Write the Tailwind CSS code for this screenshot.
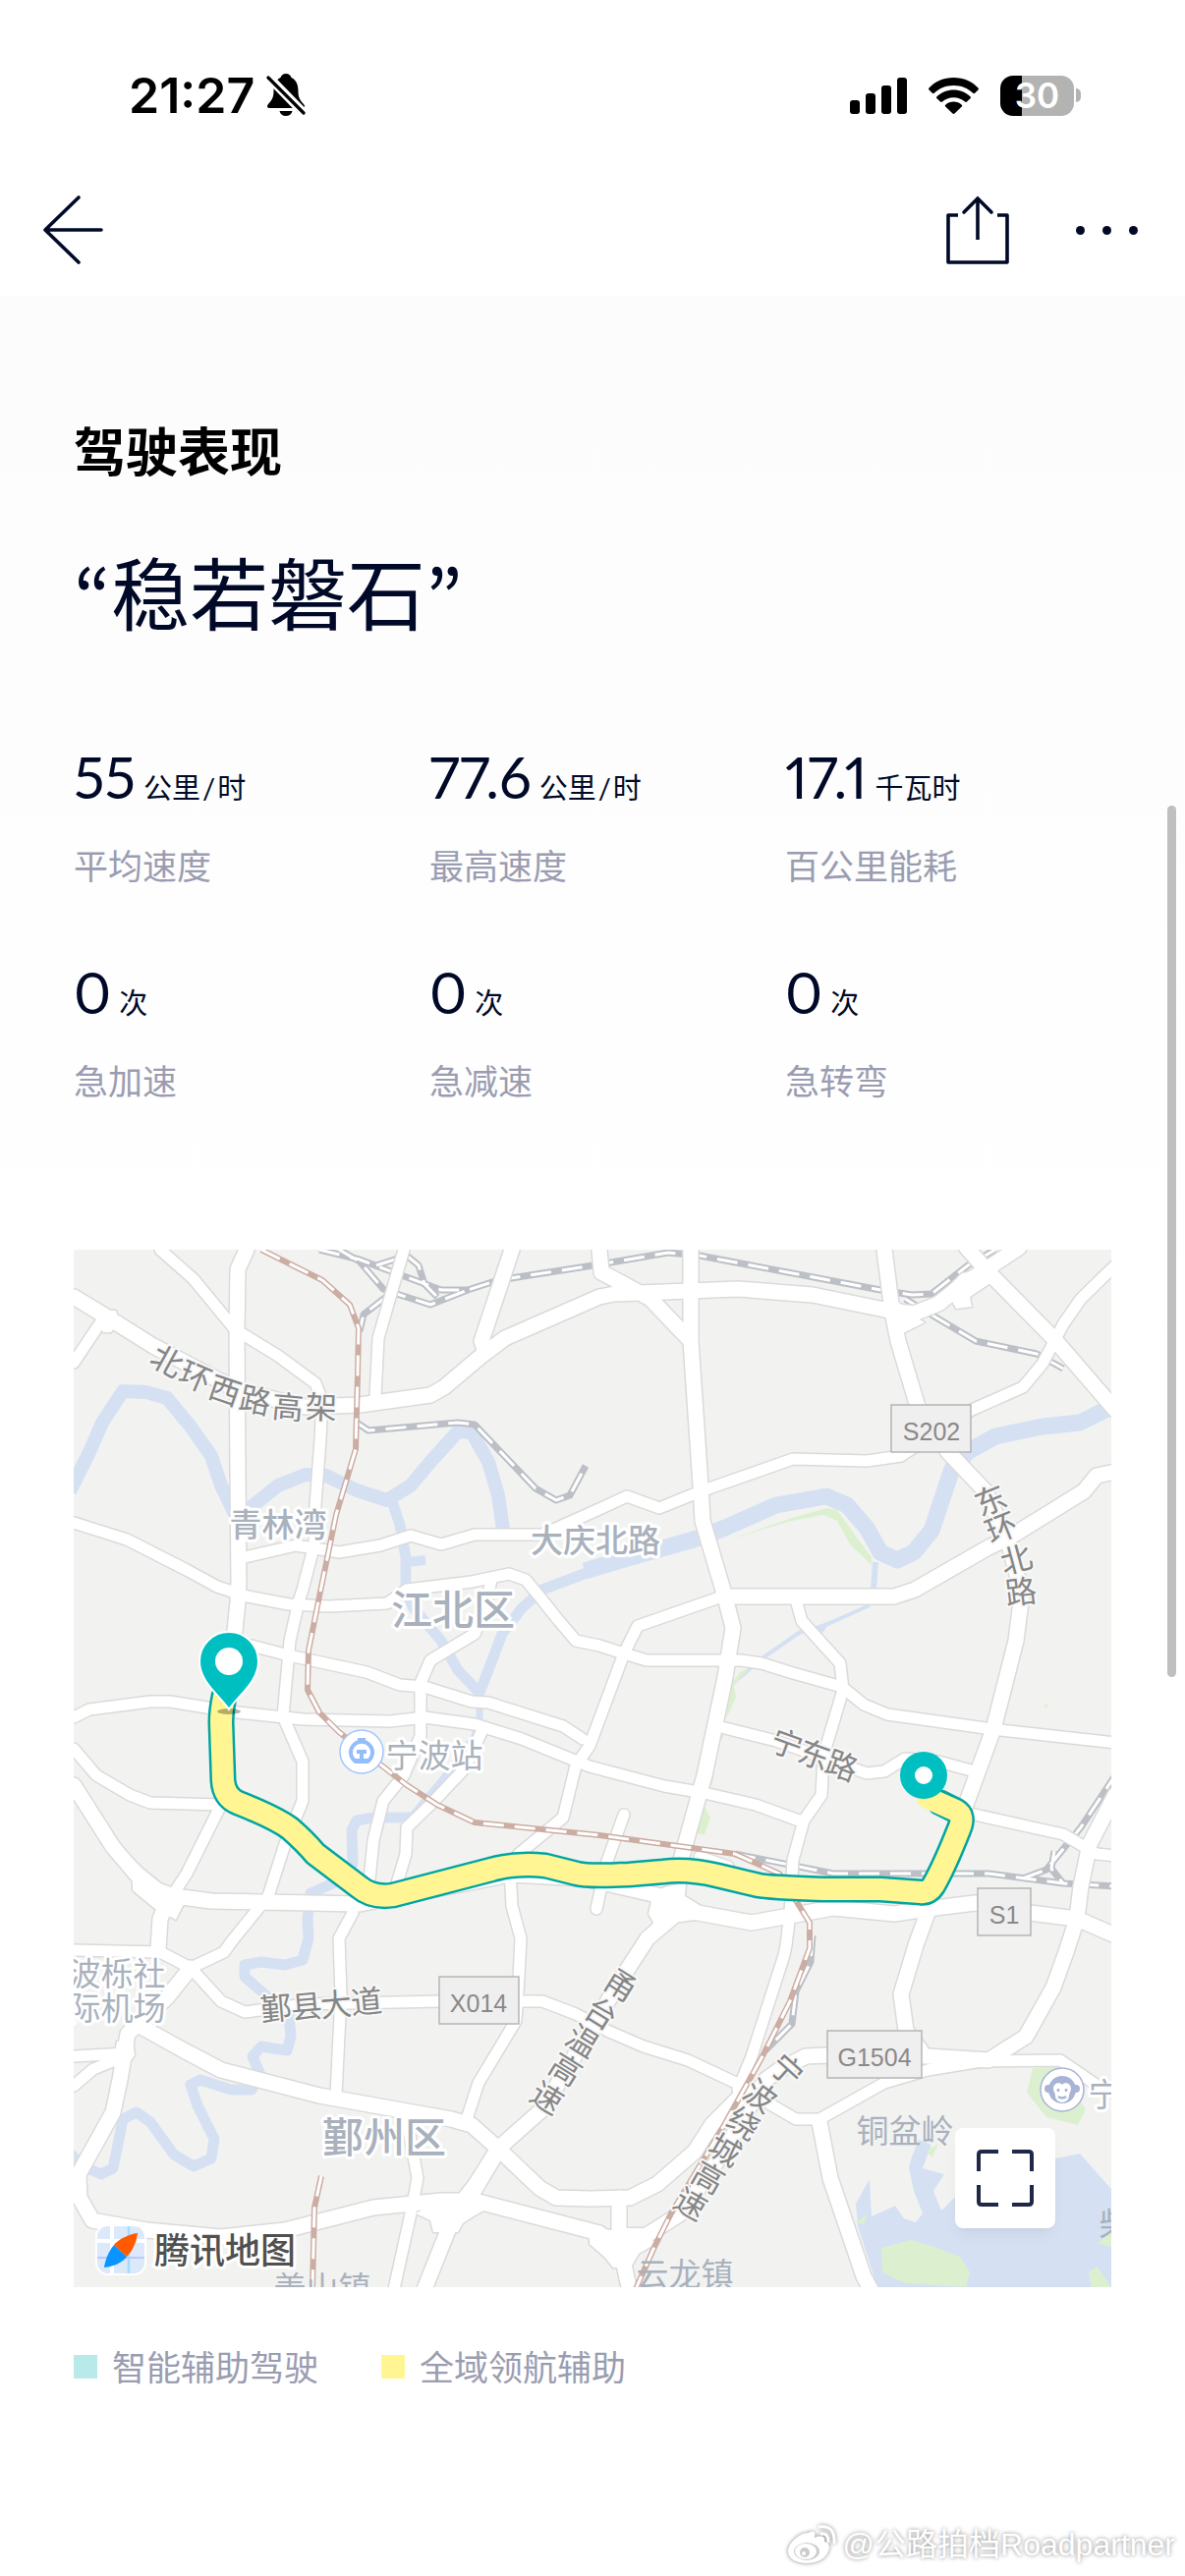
<!DOCTYPE html>
<html lang="zh-CN">
<head>
    <meta charset="UTF-8">
    <meta name="viewport" content="width=device-width, initial-scale=1.0">
    <title>驾驶表现</title>
    <script src="https://cdn.jsdelivr.net/npm/@tailwindcss/browser@4"></script>
</head>
<body class="relative min-h-screen bg-white text-[#000a28] font-['Lato','Noto_Sans_CJK_SC',sans-serif]">

    <!-- status bar -->
    <div class="flex h-[194px] items-center justify-between pl-[131px] pr-[106px] text-black">
        <div class="flex items-center gap-3">
            <span class="font-['Inter',sans-serif] text-[50px] font-semibold leading-none">21:27</span>
            <svg class="h-11 w-10" viewBox="0 0 40 44" fill="currentColor">
                <path d="M20 0c-3 0-5 2-5.500 4C9 6.500 7.500 12 7.500 18c0 7-2.500 9.500-5.500 13-1.800 2.200-1 4 1.500 4h33c2.500 0 3.300-1.800 1.500-4-3-3.500-5.500-6-5.500-13 0-6-1.500-11.500-7-14C25 2 23 0 20 0zM13.500 38c.8 3.200 3.200 5 6.500 5s5.700-1.800 6.500-5z"/>
                <path d="M2 3l36 37" stroke="#fff" stroke-width="9"/>
                <path d="M2 4l36 36" stroke="#000" stroke-width="3.200" stroke-linecap="round"/>
            </svg>
        </div>
        <div class="flex items-center gap-[22px]">
            <svg class="h-[37px] w-[58px]" viewBox="0 0 58 37" fill="currentColor">
                <rect y="23" width="10" height="14" rx="3"/>
                <rect x="16" y="16" width="10" height="21" rx="3"/>
                <rect x="32" y="8" width="10" height="29" rx="3"/>
                <rect x="48" width="10" height="37" rx="3"/>
            </svg>
            <svg class="h-[37px] w-[51px]" viewBox="0 0 51 37" fill="currentColor">
                <path d="M25.500 0C35.500 0 44.500 4 50.500 10.500c.6.600.6 1.400 0 2l-3.300 3.300c-.6.600-1.400.6-2 0C40 10.700 33 8 25.500 8S11 10.700 5.800 15.800c-.6.600-1.400.6-2 0L.5 12.500c-.6-.6-.6-1.400 0-2C6.500 4 15.500 0 25.500 0z"/>
                <path d="M25.500 12.500c6.500 0 12.500 2.500 17 6.700.6.600.6 1.400 0 2L39 24.600c-.6.600-1.400.6-2 0-3-2.700-7-4.300-11.500-4.300S17 21.900 14 24.600c-.6.600-1.400.6-2 0l-3.500-3.400c-.6-.6-.6-1.400 0-2 4.500-4.200 10.500-6.700 17-6.700z"/>
                <path d="M25.500 24.500c3.200 0 6 1.200 8.300 3.200.6.500.6 1.300 0 1.900l-7.300 7c-.6.500-1.400.5-2 0l-7.300-7c-.6-.6-.6-1.400 0-1.900 2.300-2 5.100-3.200 8.300-3.200z"/>
            </svg>
            <div class="flex items-center gap-0.5">
                <div class="flex h-[41px] w-[75px] items-center justify-center rounded-[13px] bg-linear-to-r from-black from-30% to-[#b3b3b3] to-30% font-['Inter',sans-serif] text-[35px] font-semibold leading-none text-white">30</div>
                <div class="h-3.5 w-[5px] rounded-r-full bg-[#b3b3b3]"></div>
            </div>
        </div>
    </div>

    <!-- nav -->
    <nav class="flex h-20 items-center justify-between pl-11 pr-12">
        <button aria-label="返回">
            <svg class="h-[70px] w-[62px]" viewBox="0 0 62 70" fill="none" stroke="currentColor" stroke-width="3.600" stroke-linecap="round" stroke-linejoin="round">
                <path d="M36 2L2 35l34 33M2 35h57"/>
            </svg>
        </button>
        <div class="flex items-center gap-[68px]">
            <button aria-label="分享">
                <svg class="h-[70px] w-[64px]" viewBox="0 0 64 70" fill="none" stroke="currentColor" stroke-width="3.600">
                    <path d="M12 20H2v48h60V20H52M32 3v42" stroke-linejoin="round"/>
                    <path d="M18 17L32 3l14 14" stroke-linecap="round"/>
                </svg>
            </button>
            <button aria-label="更多" class="flex gap-[18px]">
                <i class="size-[9px] rounded-full bg-current"></i>
                <i class="size-[9px] rounded-full bg-current"></i>
                <i class="size-[9px] rounded-full bg-current"></i>
            </button>
        </div>
    </nav>

    <main class="mt-[27px] bg-linear-to-b from-[#fcfcfc] to-white to-50% px-[75px] pt-[120px]">
        <h2 class="text-[53px] font-bold leading-[78px] text-black">驾驶表现</h2>
        <h1 class="mt-[45px] flex text-[80px] leading-[120px]"><span class="font-['Noto_Sans_CJK_KR',sans-serif]">“</span>稳若磐石<span class="font-['Noto_Sans_CJK_KR',sans-serif]">”</span></h1>

        <dl class="mt-[87px] grid grid-cols-3 gap-x-[30px] gap-y-16 proportional-nums">
            <div class="flex flex-col-reverse gap-[25px]">
                <dt class="text-[35px] leading-[50px] text-[#9a9db1]">平均速度</dt>
                <dd class="flex h-20 items-baseline gap-2 text-[58px] leading-[80px]">55<span class="text-[29px]">公里<span class="px-0.5">/</span>时</span></dd>
            </div>
            <div class="flex flex-col-reverse gap-[25px]">
                <dt class="text-[35px] leading-[50px] text-[#9a9db1]">最高速度</dt>
                <dd class="flex h-20 items-baseline gap-2 text-[58px] leading-[80px]">77.6<span class="text-[29px]">公里<span class="px-0.5">/</span>时</span></dd>
            </div>
            <div class="flex flex-col-reverse gap-[25px]">
                <dt class="text-[35px] leading-[50px] text-[#9a9db1]">百公里能耗</dt>
                <dd class="flex h-20 items-baseline gap-2 text-[58px] leading-[80px]">17.1<span class="text-[29px]">千瓦时</span></dd>
            </div>
            <div class="flex flex-col-reverse gap-[25px]">
                <dt class="text-[35px] leading-[50px] text-[#9a9db1]">急加速</dt>
                <dd class="flex h-20 items-baseline gap-2 text-[58px] leading-[80px]">0<span class="text-[29px]">次</span></dd>
            </div>
            <div class="flex flex-col-reverse gap-[25px]">
                <dt class="text-[35px] leading-[50px] text-[#9a9db1]">急减速</dt>
                <dd class="flex h-20 items-baseline gap-2 text-[58px] leading-[80px]">0<span class="text-[29px]">次</span></dd>
            </div>
            <div class="flex flex-col-reverse gap-[25px]">
                <dt class="text-[35px] leading-[50px] text-[#9a9db1]">急转弯</dt>
                <dd class="flex h-20 items-baseline gap-2 text-[58px] leading-[80px]">0<span class="text-[29px]">次</span></dd>
            </div>
        </dl>

        <!-- trip map -->
        <div class="relative mt-[147px]">
            <svg class="block aspect-square w-full bg-[#f2f3f1] font-['Noto_Sans_CJK_SC',sans-serif]" viewBox="0 0 1056 1056">
                <defs>
                    <g id="minor">
                        <path d="M88 0L122 30 164 81 208 108 246 136 253 153 251 193 246 260 245 300 233 346 229 358 220 398 213 475 233 521 233 561 215 605 198 658 160 705 153 715 119 731"/>
                        <path d="M26 76L0 115"/>
                        <path d="M336 0L310 90 307 150"/>
                        <path d="M174 313L226 301 270 308 312 301 343 291 374 300 408 290 477 290 535 264 563 251 596 263 638 246 732 213 807 215 842 210 880 185 914 163 966 140 986 116 1007 76 1025 50 1062 14"/>
                        <path d="M0 278L54 295 115 326 146 343 177 353 219 361 260 363 319 360 339 346 405 338 443 330 460 336 474 353 494 378 511 398 535 403 560 411 583 418 679 418 700 421 732 431 782 445 804 463 828 473 935 488 1060 502"/>
                        <path d="M425 336L418 368 408 391 363 418 353 441 353 495 336 535 315 561 305 601 301 641"/>
                        <path d="M181 403L219 413 298 430 332 443 357 445 405 460 422 461 498 485 518 498"/>
                        <path d="M0 476L16 468 78 460 98 460 167 471 233 478 322 480 357 476 408 483 456 498 525 526 601 546 642 553 694 565 738 581"/>
                        <path d="M415 491L398 528 363 565 339 588 338 615 329 645"/>
                        <path d="M0 508L23 535 57 555 78 563 150 565 115 635 98 661"/>
                        <path d="M660 353L574 383 560 411 525 505 511 525 498 578 453 615 444 631 446 668 455 701 453 741 450 785 412 848 400 885"/>
                        <path d="M736 360L741 378 780 421 783 448 763 515 761 555 743 581 732 621 729 675 725 708 723 718 690 821 676 855"/>
                        <path d="M655 485L715 500 807 533 825 531 846 518 880 521 917 531"/>
                        <path d="M917 575L1007 595 1041 615 1060 617"/>
                        <path d="M284 675L270 701 272 758 267 861"/>
                        <path d="M339 885L350 945 343 981 326 1058"/>
                        <path d="M560 575L542 625 532 671"/>
                        <path d="M637 618L666 628"/>
                        <path d="M0 713L88 715 119 731 150 765 174 776 236 768 374 765 477 765 511 778 543 795 580 811 625 825 674 848 711 871 735 885 759 885 825 848 869 835 924 826 1004 825 1042 851"/>
                        <path d="M0 821L54 818M0 851L20 834 50 822"/>
                    </g>
                    <g id="major">
                        <path d="M176 0L167 20 166 83 167 226 168 340 167 358 164 388 152 458"/>
                        <path d="M0 48L33 68 81 98 167 143 236 160 291 158 363 148 377 140 415 108 439 90 535 48 550 45 676 40 752 46 825 61 855 65 880 55 904 36 962 -2"/>
                        <path d="M446 0L415 93 419 104"/>
                        <path d="M628 0L628 93 638 240 640 276 662 350 671 385 663 435 642 535 618 621"/>
                        <path d="M535 0L537 23 556 33 587 50 628 93"/>
                        <path d="M825 0L833 63 839 93 859 160 890 206 928 246 952 300 965 350 959 398 936 488 908 565"/>
                        <path d="M908 -3L931 23 997 90 1060 163"/>
                        <path d="M1060 226L1041 230 1028 246 952 293 931 303 856 346 835 353 660 353"/>
                        <path d="M0 545L40 608 74 648 102 658 140 663 291 666 444 636 520 640 611 661 635 675 690 685 773 670 835 676 869 671 917 665 973 675 1021 681 1060 698"/>
                        <path d="M95 665L88 681 86 712"/>
                        <path d="M680 860L650 890 632 918 594 951 566 965 525 966 491 965 474 955 432 915 405 891 384 885 250 861 150 835 112 815 67 790"/>
                        <path d="M119 731L95 761 55 798 47 845 40 878 5 941 6 965 19 988 74 998 150 1005 215 998 305 975 374 968 408 968 535 1001 546 1011 580 1005 618 981 660 920 704 845 718 835 745 821 766 820 869 821 931 825 969 801 997 751 1010 715 1021 681 1025 648 1034 605 1060 555"/>
                        <path d="M618 672L584 701 558 741 477 875 432 915 405 958 381 998 357 1058"/>
                        <path d="M759 888L770 945 804 1045 812 1060"/>
                        <path d="M869 675L857 708 842 758 847 795 862 815"/>
                        <path d="M555 965L555 1011 566 1060"/>
                    </g>
                    <g id="junctions">
                        <path d="M376 966L392 961 408 941 420 920 440 918 413 963 428 972 405 985 396 991 391 1000 366 1000 363 988 348 981z"/>
                        <path d="M525 994L546 998 563 996 580 996 592 1012 575 1022 567 1036 549 1036 540 1025 525 1012z"/>
                        <path d="M590 654L604 648 623 645 622 658 635 666 652 680 625 683 611 685 594 701 577 706 590 685 585 676z"/>
                        <path d="M26 78L33 62 43 62 46 74 38 84 30 84zM836 50L852 66 866 74 842 86 832 76zM888 40L904 24 928 20 936 32 912 48 914 58 898 60z"/>
                        <path d="M60 620L70 630 92 648 108 650 112 666 104 682 84 672 60 652zM44 806L60 804 62 820 52 834 40 828z"/>
                    </g>
                    <g id="railRed">
                        <path d="M191 0L253 31 281 56 290 80 289 126 287 203 267 270 250 353 239 408 238 448 250 471 270 491 339 545 370 565 408 583 535 596 673 615 718 635 749 685 749 711 729 765 701 821 662 891 608 981 591 1015 572 1058"/>
                        <path d="M252 943L245 975 243 1058"/>
                    </g>
                    <g id="railGrey">
                        <path d="M250 0L291 10 312 18 374 41 401 41 432 31 535 15 605 3 637 6 821 41 853 46 873 45 910 16 938 0"/>
                        <path d="M846 50L876 68 918 93 980 106 1007 121"/>
                        <path d="M270 0L291 12 315 40 332 46 363 56 401 41"/>
                        <path d="M318 48L295 66 291 83M308 16L339 6 351 16 357 35 370 48"/>
                        <path d="M288 176L300 184 391 176 408 178 470 243 491 255 505 250 521 220"/>
                        <path d="M673 615L773 635 931 635 1007 645 1060 648"/>
                        <path d="M966 640L990 631 1025 588 1060 535M998 612L995 630 1007 645"/>
                        <path d="M752 698L750 725 735 755 731 788 704 815"/>
                    </g>
                </defs>

                <!-- water and parks -->
                <g fill="none" stroke="#d5e1f3" stroke-linejoin="round" stroke-width="14">
                    <path d="M-4 246L16 206 29 176 50 144 74 145 95 151 119 180 140 210 150 240 163 267 178 264 208 240 236 229 257 230 288 245 319 255 343 240 363 216 391 185 405 186 422 216 432 250 437 285"/>
                    <path stroke-width="11" d="M324 256L332 280 338 313 338 346 346 365 374 398 391 428 413 451 422 428 436 391 456 365 477 346 535 324"/>
                    <path stroke-width="10" d="M338 318L358 316"/>
                    <path stroke-width="17" d="M520 327L560 315 638 293 663 283 715 260 766 251 787 260 807 283 821 308 838 316 855 308 873 286 883 256 894 223 911 205 938 190 986 180 1024 176 1060 158"/>
                    <path stroke-width="7" d="M413 451L413 478 408 495 374 541 357 561 343 578"/>
                    <path stroke-width="11" d="M343 578L305 578 288 581 283 591 284 625 264 645 241 655 238 681 239 701 233 723 215 728 191 725 174 728 174 740 191 755 219 778 221 801 217 815 191 811 182 821 190 840 181 855 160 855 129 845 119 850 126 871 143 905 140 925 122 933 102 921 78 888 64 878 50 885 45 911 40 935 28 941 16 936 -4 920"/>
                    <path stroke-width="4" d="M810 362L763 383 738 390 702 415 669 443"/>
                    <path stroke-width="6" d="M816 318L814 346"/>
                </g>
                <path fill="#d5e1f3" d="M798 994L796 971 810 946 812 984 836 973 845 986 857 990 864 981 855 958 850 935 852 926 860 906 873 911 864 935 886 941 875 958 883 978 896 965 999 925 1024 920 1056 956V1056H818zM748 386L772 377 762 390 754 389z"/>
                <g fill="#dcf0d0">
                    <path d="M667 295L731 273 766 263 777 265 797 293 812 313 812 321 790 300 777 276 763 270 731 276z"/>
                    <path d="M822 1016L852 1008 876 1015 903 1026 912 1041 908 1056 846 1052 823 1041z"/>
                    <path d="M970 858L976 833 1000 831 1030 875 1022 891 990 883z"/>
                    <path d="M1033 1041L1041 1035 1056 1056H1036zM1042 1011L1056 1000V1015zM796 990L808 982 804 992zM868 918L880 909 874 924z"/>
                    <path d="M668 445L678 430 688 425 672 444 674 456 664 478zM656 492L662 494 659 500zM646 536L652 537 646 552zM642 566L648 578 642 596 634 594zM987 465L992 461 990 467z"/>
                </g>

                <!-- roads: casing first, then the white surface, so that crossings stay open -->
                <g fill="none" stroke-linecap="round" stroke-linejoin="round">
                    <use href="#railGrey" stroke="#bcc0c6" stroke-width="7" stroke-linecap="butt"/>
                    <use href="#railGrey" stroke="#fff" stroke-width="3" stroke-dasharray="21 11" stroke-linecap="butt"/>
                    <use href="#minor" stroke="#dadada" stroke-width="14"/>
                    <use href="#major" stroke="#dadada" stroke-width="18"/>
                    <use href="#junctions" stroke="#dadada" stroke-width="3"/>
                    <use href="#minor" stroke="#fff" stroke-width="11"/>
                    <use href="#major" stroke="#fff" stroke-width="15"/>
                    <use href="#junctions" fill="#fff"/>
                    <use href="#railRed" stroke="#ccada3" stroke-width="6" stroke-linecap="butt"/>
                    <use href="#railRed" stroke="#fff" stroke-width="3" stroke-dasharray="21 11" stroke-linecap="butt"/>
                </g>

                <!-- route -->
                <g fill="none" stroke-linejoin="round" stroke-linecap="round">
                    <path stroke="#00a5a3" stroke-width="27" d="M153 455Q150 470 150 481L152 540Q153 557 167 563Q205 578 220 589Q235 602 246 615L291 649Q304 660 325 657L425 631Q450 624 480 627L512 635Q522 638 565 636L600 633Q625 630 655 637L697 647Q707 649 763 651L821 651 862 654Q870 655 875 647Q886 628 901 590Q907 576 898 571L882 563"/>
                    <path stroke="#fff693" stroke-width="22" d="M153 455Q150 470 150 481L152 540Q153 557 167 563Q205 578 220 589Q235 602 246 615L291 649Q304 660 325 657L425 631Q450 624 480 627L512 635Q522 638 565 636L600 633Q625 630 655 637L697 647Q707 649 763 651L821 651 862 654Q870 655 875 647Q886 628 901 590Q907 576 898 571L869 558"/>
                </g>

                <!-- district and place names -->
                <g fill="#a9b1bd" stroke="#fff" stroke-width="6" stroke-linejoin="round" class="[paint-order:stroke]" font-size="33" font-weight="500" text-anchor="middle">
                    <text x="208" y="292">青林湾</text>
                    <text x="531" y="308">大庆北路</text>
                    <text x="367" y="527" font-weight="400">宁波站</text>
                    <text x="846" y="909" font-weight="400" stroke="none">铜盆岭</text>
                    <text x="622" y="1055" font-weight="400" stroke="none">云龙镇</text>
                    <text x="253" y="1069" font-weight="400" stroke="none">姜山镇</text>
                    <text x="44" y="749" font-weight="400">波栎社</text>
                    <text x="44" y="784" font-weight="400">际机场</text>
                    <text x="1049" y="872" font-weight="400">宁</text>
                    <text x="1060" y="1004" font-weight="400" stroke="none">柴</text>
                    <text x="386" y="382" font-size="42">江北区</text>
                    <text x="316" y="919" font-size="42">鄞州区</text>
                </g>

                <!-- road names, one glyph at a time along the road -->
                <g fill="#868686" stroke="#f8f8f8" stroke-width="4" stroke-linejoin="round" class="[paint-order:stroke]" font-size="32" text-anchor="middle">
                    <text transform="translate(95 113) rotate(29)" y="12">北</text>
                    <text transform="translate(124 129) rotate(23)" y="12">环</text>
                    <text transform="translate(154 143) rotate(19)" y="12">西</text>
                    <text transform="translate(185 153) rotate(12)" y="12">路</text>
                    <text transform="translate(218 160) rotate(5)" y="12">高</text>
                    <text transform="translate(252 160) rotate(2)" y="12">架</text>
                    <text transform="translate(933 255) rotate(-22)" y="12">东</text>
                    <text transform="translate(944 283) rotate(-22)" y="12">环</text>
                    <text transform="translate(959 315) rotate(-15)" y="12">北</text>
                    <text transform="translate(964 348) rotate(-7)" y="12">路</text>
                    <text transform="translate(726 503) rotate(20)" y="12">宁</text>
                    <text transform="translate(754 514) rotate(20)" y="12">东</text>
                    <text transform="translate(782 525) rotate(20)" y="12">路</text>
                    <text transform="translate(206 772) rotate(-5)" y="12">鄞</text>
                    <text transform="translate(237 770) rotate(-5)" y="12">县</text>
                    <text transform="translate(267 768) rotate(-5)" y="12">大</text>
                    <text transform="translate(298 765) rotate(-5)" y="12">道</text>
                    <text transform="translate(557 748) rotate(32)" y="12">甬</text>
                    <text transform="translate(537 777) rotate(32)" y="12">台</text>
                    <text transform="translate(518 805) rotate(32)" y="12">温</text>
                    <text transform="translate(501 834) rotate(32)" y="12">高</text>
                    <text transform="translate(482 863) rotate(32)" y="12">速</text>
                    <text transform="translate(726 835) rotate(42)" y="12">宁</text>
                    <text transform="translate(699 861) rotate(36)" y="12">波</text>
                    <text transform="translate(682 889) rotate(32)" y="12">绕</text>
                    <text transform="translate(663 916) rotate(30)" y="12">城</text>
                    <text transform="translate(646 944) rotate(30)" y="12">高</text>
                    <text transform="translate(628 971) rotate(30)" y="12">速</text>
                </g>

                <!-- road numbers -->
                <g fill="#efefef" stroke="#b5b5b5" stroke-width="1.500">
                    <rect x="832" y="158" width="81" height="48"/>
                    <rect x="920" y="650" width="54" height="48"/>
                    <rect x="372" y="740" width="81" height="48"/>
                    <rect x="767" y="795" width="96" height="48"/>
                </g>
                <g fill="#8c8888" class="font-['Liberation_Sans',sans-serif]" font-size="25" text-anchor="middle">
                    <text x="873" y="194">S202</text>
                    <text x="947" y="686">S1</text>
                    <text x="412" y="776">X014</text>
                    <text x="815" y="831">G1504</text>
                </g>

                <!-- railway station -->
                <circle cx="293" cy="511" r="22" fill="#fff" stroke="#a3c5fb" stroke-width="1.500"/>
                <path d="M287 521A11 11 0 1 1 299 521" fill="none" stroke="#93bdfb" stroke-width="4"/>
                <path fill="#93bdfb" d="M289 500v-3h8v3zM288 509h10v4h-3v5h5v5h-14v-5h5v-5h-3z"/>
                <!-- zoo -->
                <circle cx="1006" cy="855" r="22" fill="#fff" stroke="#a9b3d6" stroke-width="1.500"/>
                <circle cx="992" cy="854" r="4" fill="#a9b3d6"/>
                <circle cx="1020" cy="854" r="4" fill="#a9b3d6"/>
                <circle cx="1006" cy="855" r="14" fill="#a9b3d6"/>
                <path fill="#fff" d="M1006 850c2-3 9-2 9 4 0 3-2 4-2 7 0 9-14 9-14 0 0-3-2-4-2-7 0-6 7-7 9-4z"/>
                <path d="M1002 854v3M1010 854v3M1002 862q4 3 8 0" fill="none" stroke="#a9b3d6" stroke-width="2.500"/>

                <!-- start and end -->
                <ellipse cx="158" cy="470" rx="12" ry="3" fill="#000" fill-opacity=".3"/>
                <path fill="#00bfc0" stroke="#fff" stroke-width="2" d="M158 468C148 453 128 440 128 419a30 30 0 0 1 60 0c0 21-20 34-30 49z"/>
                <circle cx="158" cy="419" r="14" fill="#fff"/>
                <circle cx="865" cy="535" r="24" fill="#00bfc0"/>
                <circle cx="865" cy="535" r="9" fill="#fff"/>

                <!-- map provider -->
                <rect x="22" y="992" width="52" height="52" rx="13" fill="#fff"/>
                <rect x="24" y="994" width="48" height="48" rx="11" fill="#dbe9fb"/>
                <path d="M39 994v48M24 1009h48" stroke="#fff" stroke-width="4"/>
                <path d="M56 994v48" stroke="#a5dcfc" stroke-width="2.500"/>
                <path d="M24 1026h48" stroke="#bcc8f8" stroke-width="2"/>
                <path fill="#ff5a00" d="M65 1001c-9 1-19 6-24 12l13 12c6-6 10-15 11-24z"/>
                <path fill="#0a94ff" d="M31 1036c9-1 19-5 23-11l-13-12c-5 6-9 15-10 23z"/>
                <text x="82" y="1032" font-size="36" font-weight="500" fill="#505050" stroke="#fff" stroke-width="6" stroke-linejoin="round" class="[paint-order:stroke]">腾讯地图</text>
            </svg>
            <button aria-label="全屏" class="absolute bottom-[60px] right-[57px] flex size-[102px] items-center justify-center rounded-lg bg-white shadow-lg shadow-black/5">
                <svg class="size-[58px]" viewBox="0 0 58 58" fill="none" stroke="#202747" stroke-width="4">
                    <path d="M2 22V5q0-3 3-3h17M36 2h17q3 0 3 3v17M56 36v17q0 3-3 3H36M22 56H5q-3 0-3-3V36"/>
                </svg>
            </button>
        </div>

        <ul class="mt-14 flex gap-16 text-[35px] leading-[50px] text-[#9a9db1]">
            <li class="flex items-center gap-[15px]"><i class="size-6 bg-[#b9eaea]"></i>智能辅助驾驶</li>
            <li class="flex items-center gap-[15px]"><i class="size-6 bg-[#fff693]"></i>全域领航辅助</li>
        </ul>
    </main>

    <footer class="mt-[132px] flex h-12 items-center justify-end gap-1.5 pr-2.5">
        <svg class="h-10 w-[50px] drop-shadow-[0_0_2px_#888]" viewBox="0 0 50 40" fill="#fff">
            <path d="M21 8c4-3 8-2 6 5 6-3 12-1 10 4 5 1 6 5 4 10-3 8-12 12-22 12C8 39 0 34 0 27 0 19 11 8 21 8z"/>
            <path fill="none" stroke="#fff" stroke-width="3" stroke-linecap="round" d="M34 9q7-1 7 8M32 2q16-2 15 16"/>
            <ellipse cx="19" cy="27" rx="13" ry="9" fill="#ccc"/>
            <ellipse cx="18" cy="27" rx="11" ry="8" fill="#fff"/>
            <circle cx="17" cy="28" r="5" fill="#ccc"/>
            <circle cx="16" cy="29" r="2" fill="#fff"/>
        </svg>
        <span class="font-['Liberation_Sans','Noto_Sans_CJK_SC',sans-serif] text-[32px] leading-none text-white text-shadow-[0_0_4px_#888]">@公路拍档Roadpartner</span>
    </footer>

    <div class="absolute right-[9px] top-[820px] h-[887px] w-[9px] rounded-full bg-[#bfbfbf]"></div>
</body>
</html>
